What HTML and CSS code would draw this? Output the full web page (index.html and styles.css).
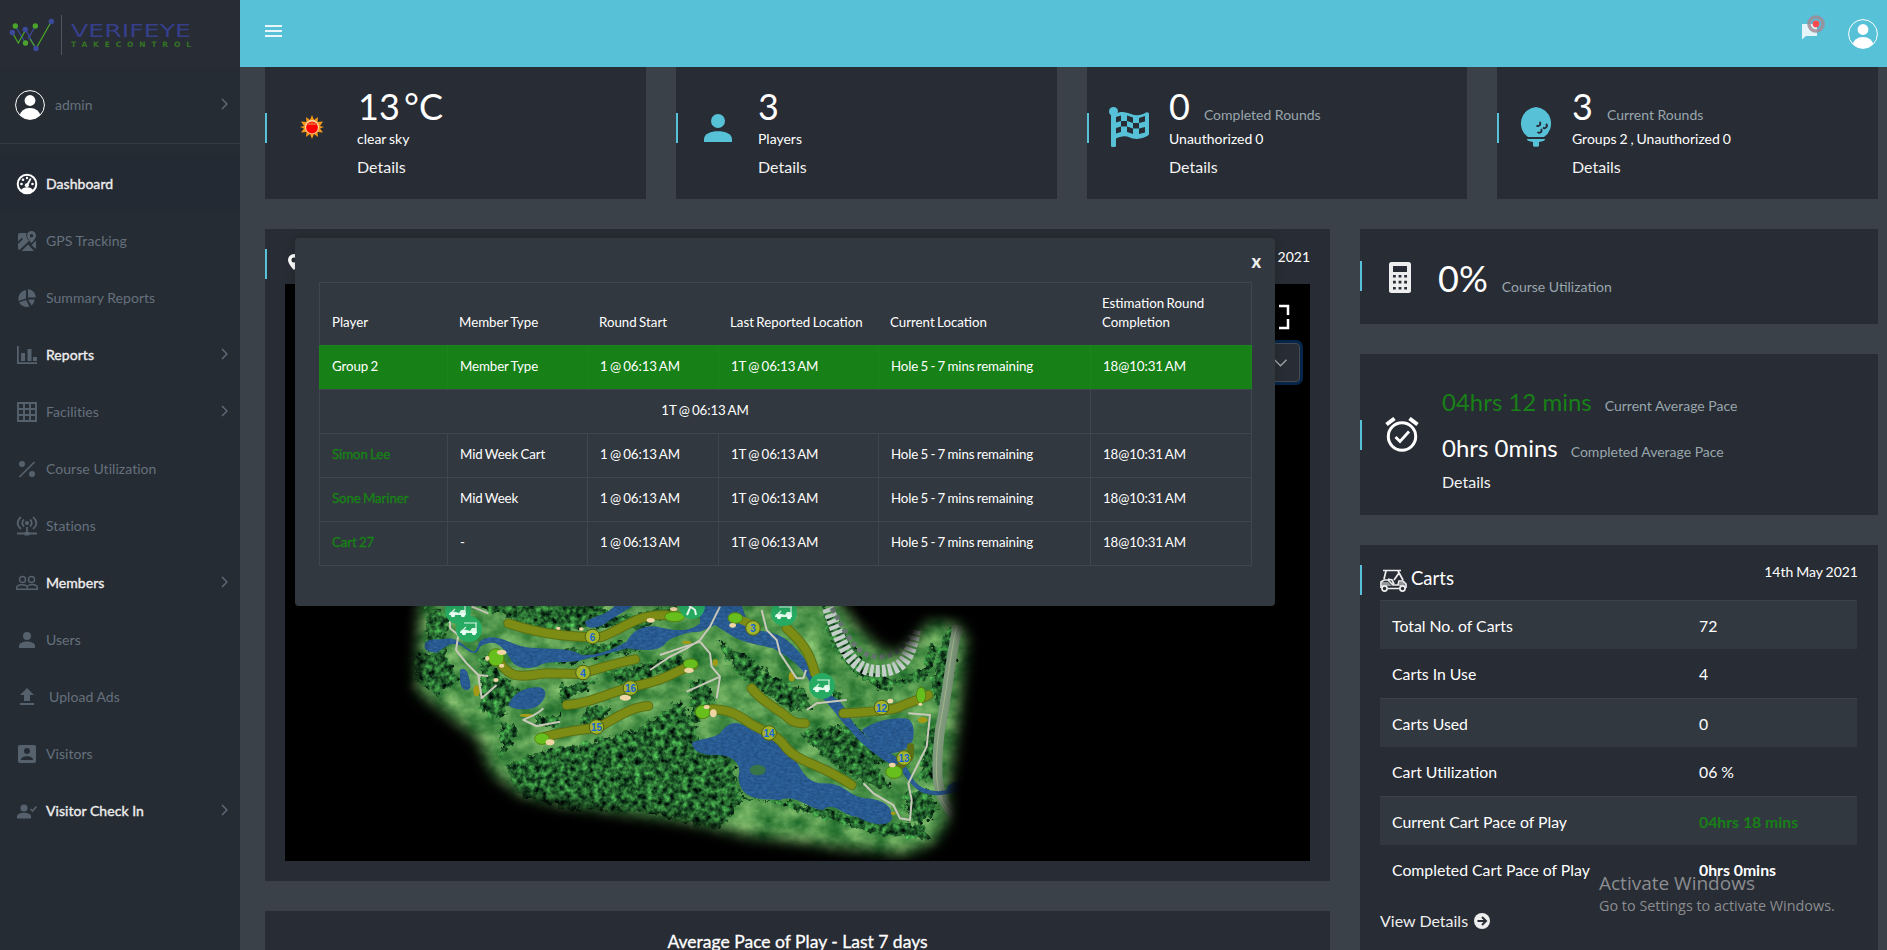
FILE: index.html
```html
<!DOCTYPE html>
<html lang="en">
<head>
<meta charset="utf-8">
<title>Verifeye Dashboard</title>
<link rel="stylesheet" href="styles.css">
</head>
<body>
<div class="app">
  <aside class="sidebar">
    <div class="brand">
      <svg class="brand-mark" viewBox="0 0 50 40" width="50" height="40" fill="none">
        <path d="M5.300 11 15.500 28M15.300 14.500 26 33.500M25.300 11 18 24" stroke="#3c4a9b" stroke-width="1.300"/>
        <path d="M2.300 17.500 8.300 28 15.300 15.500M20 24 26 33.500 41.300 6.500" stroke="#4aa32a" stroke-width="1.300"/>
        <circle cx="5.300" cy="11" r="2.700" fill="#4aa32a"/><circle cx="25.300" cy="11" r="2.700" fill="#4aa32a"/><circle cx="15.500" cy="28" r="2.700" fill="#4aa32a"/>
        <circle cx="2.300" cy="17.500" r="2.700" fill="#3d4a9c"/><circle cx="15.300" cy="14.500" r="2.700" fill="#3d4a9c"/><circle cx="26" cy="33.500" r="2.700" fill="#3d4a9c"/><circle cx="41.300" cy="6.500" r="2.700" fill="#3d4a9c"/>
      </svg>
      <svg class="brand-text" viewBox="0 0 122 30" width="122" height="30">
        <text x="0" y="18" textLength="120" lengthAdjust="spacingAndGlyphs" class="bt1">VERIFEYE</text>
        <text x="0" y="27.500" textLength="120" lengthAdjust="spacing" class="bt2">TAKECONTROL</text>
      </svg>
    </div>
    <div class="user">
      <svg width="30" height="30" viewBox="0 0 30 30"><defs><clipPath id="av"><circle cx="15" cy="15" r="14.300"/></clipPath></defs><circle cx="15" cy="15" r="14.400" fill="none" stroke="#fff"/><circle cx="15" cy="10.500" r="5.400" fill="#fff"/><ellipse cx="15" cy="26.500" rx="10.500" ry="8.500" fill="#fff" clip-path="url(#av)"/></svg>
      <span class="user-name">admin</span>
      <svg class="chev" width="7" height="12" viewBox="0 0 7 12"><path d="m1 1 5 5-5 5"/></svg>
    </div>
    <nav class="nav">
      <a class="item on"><svg class="ic" viewBox="0 0 22 22"><circle cx="11" cy="11" r="9.300" fill="none" stroke="currentColor" stroke-width="2"/><path d="M4.500 18c1-2.500 3.500-3.700 6.500-3.700s5.500 1.200 6.500 3.700a10 10 0 0 1-13 0z"/><circle cx="5.500" cy="11" r="1.300"/><circle cx="7" cy="6.800" r="1.300"/><circle cx="11" cy="5" r="1.200"/><circle cx="16.500" cy="11" r="1.300"/><circle cx="10.800" cy="12.300" r="2"/><path d="M10 12 14 5l1.500.8L12 13z"/></svg><span>Dashboard</span></a>
      <a class="item"><svg class="ic" viewBox="0 0 22 22"><path d="M4 3h6.500C9.500 5.500 10.500 8 13 11L3.500 20A2 2 0 0 1 2 18V14l5-5-1.500-1L2 11.500V5a2 2 0 0 1 2-2z"/><path d="M5.500 21 12 14.500l6 6.500zM13.500 13.300 15.500 15 20 10.500V19z"/><path d="M15.500 1a4.500 4.500 0 0 0-4.500 4.500c0 3 4.500 7.500 4.500 7.500S20 8.500 20 5.500A4.500 4.500 0 0 0 15.500 1zm0 3a1.700 1.700 0 1 1 0 3.400 1.700 1.700 0 0 1 0-3.400z" fill-rule="evenodd"/></svg><span>GPS Tracking</span></a>
      <a class="item"><svg class="ic" viewBox="0 0 22 22"><path d="M12 2a9 9 0 0 1 8 8.500h-8zM10 3v8.500L2.500 14A9 9 0 0 1 10 3zM3 15.500l7-2.500 3.500 6.500A9 9 0 0 1 3 15.500zM12 12.500h6.500c0 2.500-1.300 4.500-3 6z"/></svg><span>Summary Reports</span></a>
      <a class="item strong"><svg class="ic" viewBox="0 0 22 22"><path d="M1 2h1.800v16.200H21V20H1zM5 9h4v8H5zM11.500 5h4v12h-4zM17 13h4v4h-4z"/></svg><span>Reports</span><svg class="chev" width="7" height="12" viewBox="0 0 7 12"><path d="m1 1 5 5-5 5"/></svg></a>
      <a class="item"><svg class="ic" viewBox="0 0 22 22"><path d="M2 2h18v18H2zM8 2v18M14 2v18M2 8h18M2 14h18" fill="none" stroke="currentColor" stroke-width="1.900"/></svg><span>Facilities</span><svg class="chev" width="7" height="12" viewBox="0 0 7 12"><path d="m1 1 5 5-5 5"/></svg></a>
      <a class="item"><svg class="ic" viewBox="0 0 22 22"><circle cx="6" cy="6" r="3"/><circle cx="16" cy="16" r="3"/><path d="M18.500 4 3.500 19" stroke="currentColor" stroke-width="1.700"/></svg><span>Course Utilization</span></a>
      <a class="item"><svg class="ic" viewBox="0 0 22 22"><path d="M5 2C.5 6 .5 10 5 14M17 2c4.500 4 4.500 8 0 12M8 4.500c-2.300 2-2.300 5 0 7M14 4.500c2.300 2 2.300 5 0 7M1 18.500h20M11 12v6" fill="none" stroke="currentColor" stroke-width="1.800"/><circle cx="11" cy="8" r="2"/><path d="M8.500 17h5v3.500h-5z"/></svg><span>Stations</span></a>
      <a class="item strong"><svg class="ic" viewBox="0 0 22 22"><g fill="none" stroke="currentColor" stroke-width="1.500"><circle cx="6.500" cy="7.500" r="3"/><circle cx="15.500" cy="7.500" r="3"/><path d="M.8 17.300v-1.800c0-3.700 10.500-3.700 10.500 0v1.800zM11.300 17.300h10v-1.800c0-3.400-7-3.700-9.500-1.500"/></g></svg><span>Members</span><svg class="chev" width="7" height="12" viewBox="0 0 7 12"><path d="m1 1 5 5-5 5"/></svg></a>
      <a class="item"><svg class="ic" viewBox="0 0 22 22"><circle cx="11" cy="7" r="4"/><path d="M3 19v-2c0-6 16-6 16 0v2z"/></svg><span>Users</span></a>
      <a class="item"><svg class="ic" viewBox="0 0 22 22"><path d="m11 2 7 7h-4v6H8V9H4zM4 17h14v2H4z"/></svg><span class="nudge">Upload Ads</span></a>
      <a class="item"><svg class="ic" viewBox="0 0 22 22"><path d="M4 2h14a2 2 0 0 1 2 2v14a2 2 0 0 1-2 2H4a2 2 0 0 1-2-2V4a2 2 0 0 1 2-2zm7 3a3 3 0 1 0 0 6 3 3 0 0 0 0-6zM5 17h12c0-5-12-5-12 0z" fill-rule="evenodd"/></svg><span>Visitors</span></a>
      <a class="item strong"><svg class="ic" viewBox="0 0 22 22"><circle cx="8" cy="8" r="3.600"/><path d="M1 18.500v-2c0-5 14-5 14 0v2z"/><path d="m14.500 9 2 2 4-4.500" fill="none" stroke="currentColor" stroke-width="1.600"/></svg><span>Visitor Check In</span><svg class="chev" width="7" height="12" viewBox="0 0 7 12"><path d="m1 1 5 5-5 5"/></svg></a>
    </nav>
  </aside>

  <div class="page">
    <header class="topbar">
      <svg width="17" height="12" viewBox="0 0 17 12"><path d="M0 1h17M0 6h17M0 11h17" stroke="#e9f7fa" stroke-width="2"/></svg>
      <div class="top-right">
        <svg width="26" height="26" viewBox="0 0 26 26"><path d="M1 9h15v12H5l-4 3.500z" fill="#e3f5f9"/><circle cx="15" cy="9" r="7" fill="none" stroke="#a08b97" stroke-width="3.600" opacity=".85"/><circle cx="15" cy="9" r="3.400" fill="#fb4b50"/></svg>
        <svg width="30" height="30" viewBox="0 0 30 30"><circle cx="15" cy="15" r="14.400" fill="none" stroke="#fff"/><circle cx="15" cy="10.500" r="5.400" fill="#fff"/><ellipse cx="15" cy="26.500" rx="10.500" ry="8.500" fill="#fff" clip-path="url(#av)"/></svg>
      </div>
    </header>

    <main class="content">
      <section class="stats">
        <div class="card stat">
          <div class="stat-icon w1"><svg width="24" height="24" viewBox="0 0 24 24"><path d="m12 0 2 5 4-3-.5 5L23 6.500 20 11l4 1-4 1.500 3 4-5.500-.5.500 5-4-3-2 5-2-5-4 3 .500-5-5.500.500 3-4L0 12l4-1-3-4.500 5.500.500L6 2l4 3z" fill="#f39a1d"/><circle cx="12" cy="12" r="7" fill="#ffe0a8"/><circle cx="12" cy="12.500" r="5.900" fill="#f00"/><path d="M7 10a5.600 5 0 0 1 10 0z" fill="#ef5a26"/></svg></div>
          <div class="stat-body"><div class="big temp">13 °C</div><div class="sub">clear sky</div><a class="det">Details</a></div>
        </div>
        <div class="card stat">
          <div class="stat-icon w2"><svg width="28" height="28" viewBox="0 0 28 28" fill="#57c1d8"><circle cx="14" cy="7" r="7"/><path d="M0 28v-3c0-10.500 28-10.500 28 0v3z"/></svg></div>
          <div class="stat-body"><div class="big">3</div><div class="sub">Players</div><a class="det">Details</a></div>
        </div>
        <div class="card stat">
          <div class="stat-icon w3"><svg width="40" height="40" viewBox="0 0 40 40"><g fill="#57c1d8"><circle cx="4.500" cy="4.500" r="4.500"/><rect x="2" y="4" width="5" height="36" rx="1.500"/><path d="M6 7c6-3.500 11-2 16 0 5 2 10 1.500 15-1.500 1.500-.8 3 0 3 1.500v20c0 2-11 7.500-19 3.500-5-2-9-1.500-15 1.500z"/></g><g fill="#282c34"><path d="m7 10 5-1.500V14l-5 1.500zM18 8.500l6 2V16l-6-2zM30 11l6-2v5.500L30 16zM12 14l6 0v5.500l-6 0zM24 16l6 0v5.500l-6 0zM7 21l5-1.500V25l-5 1.500zM18 19.500l6 2V27l-6-2zM30 21.500l6-1.500v5.500L30 27z"/></g></svg></div>
          <div class="stat-body"><div class="big">0<small>Completed Rounds</small></div><div class="sub">Unauthorized 0</div><a class="det">Details</a></div>
        </div>
        <div class="card stat">
          <div class="stat-icon w4"><svg width="34" height="40" viewBox="0 0 34 40" fill="#57c1d8"><path d="M17 0a16.500 16.500 0 0 1 8 30H9A16.500 16.500 0 0 1 17 0z"/><path d="M8 32h18c0 2-2.500 2.500-6 3v4c0 1-6 1-6 0v-4c-3.500-.5-6-1-6-3z"/><path d="M20.500 15a2 2 0 0 1-3 3.500M27 17a2 2 0 0 1-3 3.500M22 22a2 2 0 0 1-3.500 3" fill="none" stroke="#282c34" stroke-width="1.900"/></svg></div>
          <div class="stat-body"><div class="big">3<small>Current Rounds</small></div><div class="sub">Groups 2 , Unauthorized 0</div><a class="det">Details</a></div>
        </div>
      </section>

      <section class="columns">
        <div class="left">
          <div class="card map-card">
            <div class="map-head"><svg width="12" height="16" viewBox="0 0 12 16"><path d="M6 0a6 6 0 0 0-6 6c0 4 6 10 6 10s6-6 6-10a6 6 0 0 0-6-6zm0 3.500a2.500 2.500 0 1 1 0 5 2.500 2.500 0 0 1 0-5z" fill="#fff" fill-rule="evenodd"/></svg><span>14th May 2021</span></div>
            <div class="map">
              <svg class="map-svg" width="1025" height="577" viewBox="285 284 1025 577" color-interpolation-filters="sRGB">
                <defs>
                  <filter id="soft" x="-10%" y="-10%" width="120%" height="120%"><feGaussianBlur stdDeviation="7"/></filter>
                  <mask id="edge"><path filter="url(#soft)" fill="#fff" d="M424 560 418 650 417 690 450 716 478 738 492 772 520 794 560 804 620 812 690 822 750 836 830 846 905 854 934 842 948 818 946 800 958 720 966 640 958 625 930 622 915 640 900 655 880 650 855 625 838 600 830 560z"/></mask>
                  <filter id="grass" x="0" y="0" width="100%" height="100%"><feTurbulence type="fractalNoise" baseFrequency=".045 .06" numOctaves="4" seed="4"/><feColorMatrix values=".6 0 0 0 .02  .5 0 0 0 .34  .4 0 0 0 .1  0 0 0 0 1"/><feComposite in2="SourceGraphic" operator="in"/></filter>
                  <filter id="trees" x="-5%" y="-5%" width="110%" height="110%"><feTurbulence type="fractalNoise" baseFrequency=".17" numOctaves="3" seed="9" result="n"/><feColorMatrix in="n" values=".55 0 0 0 -.13  1.150 0 0 0 -.18  .5 0 0 0 -.07  0 0 0 0 1" result="c"/><feDisplacementMap in="SourceGraphic" in2="n" scale="12" xChannelSelector="R" yChannelSelector="G" result="d"/><feComposite in="c" in2="d" operator="in"/></filter>
                  <filter id="water" x="0" y="0" width="100%" height="100%"><feTurbulence type="fractalNoise" baseFrequency=".08 .15" numOctaves="2" seed="3"/><feColorMatrix values=".1 0 0 0 .11  .15 0 0 0 .28  .2 0 0 0 .47  0 0 0 0 1"/><feComposite in2="SourceGraphic" operator="in"/></filter>
                  <g id="cart"><circle r="13" fill="#27ab63"/><path d="M-5-6H8M7-6v8M-6 1 -3-2" stroke="#d8f5e4" stroke-width="1.200" fill="none"/><path d="M-9 3c1-3 4-3 7-2l3 1 2-3h4l1 4v1H-9z" fill="#dff8ea"/><circle cx="-5" cy="4" r="2.200" fill="#eafff3"/><circle cx="5" cy="4" r="2.200" fill="#eafff3"/></g>
                </defs>
                <g mask="url(#edge)">
                  <rect x="400" y="560" width="600" height="300" filter="url(#grass)"/>
                  <g filter="url(#trees)" fill="#063">
                    <path d="M540 752 590 742 640 728 680 700 700 738 730 755 740 795 780 805 830 820 880 835 930 840 925 825 880 822 830 810 780 800 740 800 720 830 640 812 570 810 520 795 505 765z"/>
                    <path d="M716 640 745 655 775 678 805 690 812 708 795 712 765 695 735 670zM800 735 830 725 860 740 880 770 890 790 870 785 840 770zM835 730 855 725 890 760 880 765zM690 680 705 680 715 700 700 720 690 725zM905 790 928 790 938 810 920 825 905 810z"/>
                    <path d="M428 610 450 612 445 650 425 645zM415 655 445 650 458 680 435 695 415 680zM480 655 500 675 520 690 500 720 480 710zM470 600 600 600 620 625 550 632 480 608zM610 672 680 655 690 665 620 688zM560 685 600 680 560 705zM535 715 560 715 560 726 535 725zM585 708 610 706 600 725 580 725zM600 620 640 612 680 605 640 630zM548 655 620 640 640 650 560 665zM500 720 520 730 500 760zM820 600 850 640 865 672 900 680 925 665 930 640 940 650 925 680 880 690 850 670 830 640zM945 630 960 630 950 690 945 720 930 690zM925 735 945 720 935 780 920 780zM830 686 845 695 830 705z"/>
                  </g>
                  <path d="M958 625C950 660 948 690 940 730C934 780 938 800 955 815" fill="none" stroke="#7f9a7c" stroke-width="10"/>
                  <path d="M957 625C949 660 947 690 939 730C933 780 937 800 952 813" fill="none" stroke="#a9b58f" stroke-width="1"/>
                  <g stroke="#c4cfca" fill="none"><path d="M828 608C842 645 850 672 880 671C905 670 910 655 915 630" stroke-width="12" stroke-dasharray="4 2"/><path d="M832 608C848 635 855 657 880 657C900 655 905 645 912 628" stroke="#687a71" stroke-width="5" stroke-dasharray="5 3"/></g>
                  <g transform="translate(400 600) scale(.33333)" filter="url(#water)">
                    <path d="M75 130C85 112 115 122 145 115C180 115 200 150 222 155C245 140 220 120 270 112C310 110 335 135 380 142C450 150 500 140 545 165C610 165 640 145 680 125C700 85 740 75 770 80C800 85 860 105 900 70L900 50 920 0 1020 0 1050 90C1120 95 1150 100 1200 160C1230 190 1250 250 1300 290C1350 320 1330 350 1400 410C1440 450 1500 460 1530 520C1550 570 1600 580 1640 570C1640 540 1700 540 1730 560L1725 580C1690 560 1650 590 1600 585C1540 580 1530 540 1500 510C1430 470 1380 430 1350 390C1310 350 1300 320 1240 270C1220 210 1180 180 1120 145C1060 130 1040 130 1000 110L945 75 900 95C860 95 820 110 800 125C780 160 720 150 680 145C600 170 560 175 540 182C480 190 440 180 410 200C370 210 340 200 330 175C310 145 290 110 240 140C230 170 210 160 190 140C150 120 140 140 110 158C80 155 70 150 75 130z"/>
                    <path d="M555 65C600 40 620 50 660 0L720 0C690 30 640 50 610 75C580 85 560 90 555 65zM180 210C195 200 205 210 212 260C205 280 180 270 180 240zM325 315C340 280 370 260 420 262C450 270 435 310 400 325C370 330 340 330 325 315zM875 430C890 415 930 420 960 400C990 360 1010 365 1040 380C1070 400 1120 420 1150 430C1200 480 1200 540 1260 550C1340 545 1340 590 1400 595C1460 600 1480 625 1475 660C1455 685 1410 670 1370 650C1330 650 1300 600 1270 630C1230 630 1190 580 1140 600C1060 600 1020 590 1015 530C1030 480 980 460 930 465C890 460 880 450 875 430z"/>
                    <path d="M1385 390C1410 375 1440 355 1510 355C1550 350 1550 430 1520 445C1500 460 1470 460 1450 465C1430 430 1400 415 1385 390z"/>
                  </g>
                  <g transform="translate(400 600) scale(.33333)">
                    <g stroke-linecap="round" fill="none" stroke="#5c7115" stroke-width="30"><path d="M325 70C400 95 470 110 600 112C670 90 720 30 820 48"/><path d="M290 170C330 250 370 225 440 220L540 222C620 200 640 190 705 178"/><path d="M500 315C580 310 640 270 720 255C800 240 820 215 880 195"/><path d="M420 415C500 390 560 390 600 380C660 345 700 320 745 318"/><path d="M1160 85C1210 130 1230 160 1245 220"/><path d="M1055 265C1090 310 1140 330 1160 350C1180 370 1200 370 1215 370"/><path d="M910 330C970 320 1010 340 1050 370C1100 400 1130 400 1160 445C1200 490 1260 490 1355 555"/><path d="M1330 340C1400 335 1470 335 1500 320C1530 305 1560 300 1585 285"/><path d="M1480 520 1530 470 1532 440" stroke-width="22"/></g>
                    <g stroke="#7c8c14" stroke-width="24" stroke-linecap="round" fill="none"><path d="M325 70C400 95 470 110 600 112C670 90 720 30 820 48"/><path d="M290 170C330 250 370 225 440 220L540 222C620 200 640 190 705 178"/><path d="M500 315C580 310 640 270 720 255C800 240 820 215 880 195"/><path d="M420 415C500 390 560 390 600 380C660 345 700 320 745 318"/><path d="M1160 85C1210 130 1230 160 1245 220"/><path d="M1055 265C1090 310 1140 330 1160 350C1180 370 1200 370 1215 370"/><path d="M910 330C970 320 1010 340 1050 370C1100 400 1130 400 1160 445C1200 490 1260 490 1355 555"/><path d="M1330 340C1400 335 1470 335 1500 320C1530 305 1560 300 1585 285"/><path d="M1000 50 1060 75"/></g>
                    <g fill="#66bf1c" stroke="#55820f" stroke-width="3"><ellipse cx="288" cy="172" rx="24" ry="26"/><ellipse cx="824" cy="50" rx="30" ry="15"/><ellipse cx="872" cy="192" rx="22" ry="15"/><ellipse cx="426" cy="416" rx="22" ry="17"/><ellipse cx="1006" cy="54" rx="22" ry="16"/><ellipse cx="908" cy="336" rx="22" ry="20"/><ellipse cx="1563" cy="286" rx="14" ry="24"/><ellipse cx="1482" cy="516" rx="25" ry="19"/></g>
                    <g fill="#f0d5a5"><ellipse cx="305" cy="157" rx="14" ry="8"/><ellipse cx="262" cy="175" rx="6" ry="7"/><ellipse cx="305" cy="197" rx="8" ry="6"/><ellipse cx="288" cy="240" rx="8" ry="6"/><ellipse cx="867" cy="211" rx="14" ry="8"/><ellipse cx="676" cy="293" rx="17" ry="9"/><ellipse cx="450" cy="427" rx="13" ry="9"/><ellipse cx="752" cy="61" rx="12" ry="7"/><ellipse cx="821" cy="27" rx="11" ry="6"/><ellipse cx="475" cy="85" rx="7" ry="5"/><ellipse cx="544" cy="87" rx="7" ry="5"/><ellipse cx="998" cy="76" rx="10" ry="7"/><ellipse cx="940" cy="340" rx="10" ry="12"/><ellipse cx="920" cy="321" rx="9" ry="6"/><ellipse cx="1471" cy="303" rx="9" ry="7"/><ellipse cx="1477" cy="495" rx="10" ry="7"/><ellipse cx="1561" cy="313" rx="6" ry="5"/></g>
                    <g fill="#a39a16"><ellipse cx="230" cy="272" rx="10" ry="17"/><ellipse cx="380" cy="346" rx="22" ry="5"/><ellipse cx="860" cy="127" rx="14" ry="5"/><ellipse cx="1175" cy="230" rx="9" ry="14"/><ellipse cx="946" cy="188" rx="8" ry="10"/><ellipse cx="1568" cy="360" rx="15" ry="9"/><ellipse cx="1480" cy="640" rx="8" ry="5"/></g>
                    <g fill="none" stroke="#c9c8bb" stroke-width="6" stroke-linejoin="round"><path d="M150 60 150 85 175 105 168 150 200 190 235 225 245 295 290 255M235 225 265 228M430 325C410 345 390 350 370 360L410 378 480 365M960 20 930 80 900 120 860 145 810 170 750 210M900 125 780 165M215 20 265 40M900 125 930 160 935 200 960 230 950 295M960 230 860 275M1085 30 1100 90 1130 120 1140 160 1190 235 1210 235 1218 210M1220 330 1250 310 1340 300M1525 340 1590 345 1580 440 1550 500 1525 550 1535 600 1530 660 1500 655 1480 615 1420 580 1390 550"/></g>
                    <ellipse cx="1073" cy="510" rx="24" ry="16" fill="#377447"/>
                  </g>
                </g>
                <g class="holes"><g fill="#a1b52c" stroke="#4e5c14"><circle cx="592.500" cy="636.500" r="7.300"/><circle cx="583" cy="672.500" r="7.300"/><circle cx="630.500" cy="688" r="7.300"/><circle cx="596.500" cy="727" r="7.300"/><circle cx="753" cy="628" r="7.300"/><circle cx="881.500" cy="707.500" r="7.300"/><circle cx="769" cy="733" r="7.300"/><circle cx="904" cy="758" r="7.300"/></g>
                <text x="592.500" y="641">6</text><text x="583" y="677">4</text><text x="630.500" y="692">16</text><text x="596.500" y="731">15</text><text x="753" y="632">3</text><text x="881.500" y="712">12</text><text x="769" y="737">14</text><text x="904" y="762">13</text></g>
                <use href="#cart" x="458" y="611"/><use href="#cart" x="469" y="629"/><use href="#cart" x="784" y="613"/><use href="#cart" x="822" y="686"/><circle cx="692" cy="606" r="13" fill="#27ab63"/><path d="M691 602l-1 6-3 7M691 607l4 3 1 5M688 606l4-5" stroke="#eafff3" stroke-width="2" fill="none"/>
              </svg>
              <svg class="full" width="26" height="26" viewBox="0 0 26 26"><path d="M2 11V2h9M15 2h9v9M24 15v9h-9M11 24H2v-9" fill="none" stroke="#fff" stroke-width="2.500"/></svg>
              <div class="select"><svg width="13" height="8" viewBox="0 0 13 8"><path d="m.5.800 6 6 6-6" fill="none" stroke="#9fa5aa" stroke-width="1.300"/></svg></div>
            </div>
          </div>
          <div class="card chart-card">Average Pace of Play - Last 7 days</div>
        </div>

        <div class="right">
          <div class="card util">
            <svg width="22" height="31" viewBox="0 0 22 31"><path d="M2.500 0h17A2.500 2.500 0 0 1 22 2.500v26a2.500 2.500 0 0 1-2.500 2.500h-17A2.500 2.500 0 0 1 0 28.500v-26A2.500 2.500 0 0 1 2.500 0zM4 4v6h14V4zM4 13v2.600h2.800V13zM9.600 13v2.600h2.800V13zM15.200 13v2.600H18V13zM4 18.800v2.600h2.800v-2.600zM9.600 18.800v2.600h2.800v-2.600zM15.200 18.800v2.600H18v-2.600zM4 25v2.600h2.800V25zM9.600 25v2.600h2.800V25zM15.200 25v2.600H18V25z" fill="#eee" fill-rule="evenodd"/></svg>
            <div class="big">0%<small>Course Utilization</small></div>
          </div>
          <div class="card pace">
            <svg width="34" height="35" viewBox="0 0 34 35" fill="none" stroke="#fff"><circle cx="17" cy="19.500" r="13.700" stroke-width="3"/><path d="m1.500 7.500 8-6M32.500 7.500l-8-6" stroke-width="4"/><path d="m10.500 20 4.500 4.500 9-10" stroke-width="2.800"/></svg>
            <div class="pace-body">
              <div class="mid green">04hrs 12 mins<small>Current Average Pace</small></div>
              <div class="mid">0hrs 0mins<small>Completed Average Pace</small></div>
              <a class="det">Details</a>
            </div>
          </div>
          <div class="card carts">
            <div class="carts-head">
              <svg width="27" height="23" viewBox="0 0 27 23" fill="none" stroke="#eee" stroke-width="1.700"><path d="M3 1.500h18M6 2 4 10M18 2l5 9M1 19v-6l3-2h4l5 5h5l1-4h4l3 3v4M7.500 19.500h12M14 11l5-7M8 10l4 1 2 4"/><path d="M2 13h6l4 4h6l2-4h4l1 4H2z" fill="#eee" stroke="none" opacity=".55"/><circle cx="4.500" cy="19.500" r="2.600"/><circle cx="22.500" cy="19.500" r="2.600"/></svg>
              <h3>Carts</h3><span>14th May 2021</span>
            </div>
            <div class="rows">
              <div class="row"><span>Total No. of Carts</span><span>72</span></div>
              <div class="row"><span>Carts In Use</span><span>4</span></div>
              <div class="row"><span>Carts Used</span><span>0</span></div>
              <div class="row"><span>Cart Utilization</span><span>06 %</span></div>
              <div class="row"><span>Current Cart Pace of Play</span><b class="green">04hrs 18 mins</b></div>
              <div class="row"><span>Completed Cart Pace of Play</span><b>0hrs 0mins</b></div>
            </div>
            <a class="view">View Details <svg width="16" height="16" viewBox="0 0 16 16"><circle cx="8" cy="8" r="8" fill="#eee"/><path d="M3.500 8h8M8 4l4 4-4 4" fill="none" stroke="#282c34" stroke-width="2"/></svg></a>
          </div>
        </div>
      </section>
    </main>
  </div>

  <div class="modal">
    <button class="close">x</button>
    <table class="tbl">
      <colgroup><col class="c1"><col class="c2"><col class="c3"><col class="c4"><col class="c5"><col class="c6"></colgroup>
      <thead><tr><th>Player</th><th>Member Type</th><th>Round Start</th><th>Last Reported Location</th><th>Current Location</th><th>Estimation Round<br>Completion</th></tr></thead>
      <tbody>
        <tr class="group"><td>Group 2</td><td>Member Type</td><td>1 @ 06:13 AM</td><td>1T @ 06:13 AM</td><td>Hole 5 - 7 mins remaining</td><td>18@10:31 AM</td></tr>
        <tr><td colspan="5" class="mid-cell">1T @ 06:13 AM</td><td></td></tr>
        <tr><td class="green name">Simon Lee</td><td>Mid Week Cart</td><td>1 @ 06:13 AM</td><td>1T @ 06:13 AM</td><td>Hole 5 - 7 mins remaining</td><td>18@10:31 AM</td></tr>
        <tr><td class="green name">Sone Mariner</td><td>Mid Week</td><td>1 @ 06:13 AM</td><td>1T @ 06:13 AM</td><td>Hole 5 - 7 mins remaining</td><td>18@10:31 AM</td></tr>
        <tr><td class="green name">Cart 27</td><td>-</td><td>1 @ 06:13 AM</td><td>1T @ 06:13 AM</td><td>Hole 5 - 7 mins remaining</td><td>18@10:31 AM</td></tr>
      </tbody>
    </table>
  </div>

  <div class="watermark"><div class="wm1">Activate Windows</div><div class="wm2">Go to Settings to activate Windows.</div></div>
</div>
</body>
</html>
```

FILE: styles.css
```css
* { box-sizing: border-box; }
body { margin: 0; background: #3a4149; font-family: Lato, sans-serif; color: #fff; }
.app { position: relative; display: flex; width: 1887px; height: 950px; overflow: hidden; background: #3a4148; }
svg { display: block; flex: none; }

.sidebar { width: 240px; flex: none; background: #262c33; }
.brand { height: 67px; background: #282c34; display: flex; align-items: flex-start; padding: 15px 0 0 10px; }
.brand-mark { overflow: visible; }
.brand-text { margin-left: 1px; padding-left: 9px; width: 132px; height: 40px; border-left: 1px solid #51555b; padding-bottom: 6px; padding-top: 4px; }
.bt1 { font-family: "DejaVu Sans", sans-serif; font-size: 17.500px; fill: #363f8b; }
.bt2 { font-family: "DejaVu Sans", sans-serif; font-size: 7.500px; fill: #357425; font-weight: bold; }
.user { height: 77px; display: flex; align-items: center; padding: 0 12px 0 15px; border-bottom: 1px solid #333a42; }
.user-name { margin: -2px 0 0 10px; font-size: 14px; color: #65717e; }
.chev { margin-left: auto; margin-top: -2px; fill: none; stroke: #65717e; stroke-width: 1.200; }
.nav { padding-top: 11px; }
.item { display: flex; align-items: center; height: 57px; padding: 0 12px 0 16px; font-size: 14px; color: #65717e; }
.item span { margin-left: 8px; margin-top: -1px; letter-spacing: .05px; }
.item .nudge { margin-left: 11px; }
.item.on { color: #fff; background: #242a33; }
.item.on span, .item.strong span { color: #eee; -webkit-text-stroke: .35px #eee; }
.ic { width: 22px; height: 22px; fill: currentColor; color: #55616d; }
.on .ic { color: #fff; }

.page { flex: 1; min-width: 0; }
.topbar { height: 67px; background: #57c1d8; display: flex; justify-content: space-between; align-items: flex-start; padding: 25px 9px 0 25px; }
.top-right { display: flex; gap: 21px; margin-top: -10px; }
.top-right svg + svg { margin-top: 4px; }
.content { padding: 0 9px 0 25px; }

.card { position: relative; background: #282c34; }
.card::before { content: ""; position: absolute; left: 0; width: 2px; height: 30px; background: #57c1d8; }
.stats { display: grid; grid-template-columns: 381px 381px 380px 381px; gap: 30px; }
.stat { height: 132px; display: flex; }
.stat::before { top: 46px; }
.stat-icon { flex: none; display: flex; align-items: center; height: 120px; }
.w1 { width: 92px; padding-left: 35px; }
.w2 { width: 82px; padding-left: 28px; padding-top: 2px; }
.w3 { width: 82px; padding-left: 22px; }
.w4 { width: 75px; padding-left: 22px; }
.stat-body { padding-top: 17px; }
.big { font-size: 36px; line-height: 44px; height: 44px; white-space: nowrap; }
.temp { word-spacing: -5px; padding-left: 1px; }
.big small, .mid small { font-size: 14px; color: #98a6ad; margin-left: 14px; }
.sub { font-size: 14px; line-height: 22px; word-spacing: -.7px; }
.det { display: block; font-size: 16px; line-height: 24px; margin-top: 5px; color: #f3f3f3; }

.columns { display: flex; gap: 30px; margin-top: 30px; }
.left { width: 1065px; flex: none; }
.right { width: 518px; flex: none; }
.map-card { height: 652px; padding: 0 20px; }
.map-card::before { top: 20px; }
.map-head { height: 55px; display: flex; justify-content: space-between; padding: 25px 0 0 3px; font-size: 14px; }
.map-head span { margin-top: -6px; }
.map { position: relative; background: #000; height: 577px; }
.holes text { font: bold 10px "Liberation Sans", sans-serif; fill: #1765d8; text-anchor: middle; }
.full { position: absolute; right: 20px; top: 20px; }
.select { position: absolute; right: 10px; top: 59px; width: 260px; height: 39px; border: 1px solid #454b52; border-radius: 4px; background: #282c34; box-shadow: 0 0 0 3px #05264a; display: flex; align-items: center; justify-content: flex-end; padding-right: 12px; }
.chart-card { margin-top: 30px; height: 300px; text-align: center; padding-top: 19px; font-size: 17.500px; line-height: 24px; -webkit-text-stroke: .3px #fff; }
.chart-card::before { display: none; }

.util { height: 95px; display: flex; padding: 33px 0 0 29px; }
.util::before { top: 32px; }
.util .big { margin: -6px 0 0 27px; }
.pace { height: 161px; margin-top: 30px; display: flex; padding-left: 25px; }
.pace::before { top: 66px; }
.pace > svg { margin-top: 63px; }
.pace-body { margin-left: 23px; padding-top: 31px; }
.mid { font-size: 24px; line-height: 34px; margin-bottom: 12px; height: 34px; white-space: nowrap; }
.mid small { margin-left: 13px; }
.pace .det { margin-top: -7px; }
.green { color: #178017; }
.carts { height: 420px; margin-top: 30px; padding: 0 21px 0 20px; }
.carts::before { top: 20px; }
.carts-head { height: 55px; display: flex; padding-top: 24px; }
.carts-head h3 { margin: -3px 0 0 4px; font-size: 18.500px; font-weight: 400; line-height: 24px; }
.carts-head span { margin: -6px -1px 0 auto; font-size: 14px; line-height: 18px; word-spacing: -.7px; }
.row { height: 49px; display: flex; align-items: center; padding: 0 0 0 12px; font-size: 15.800px; }
.row > :first-child { width: 307px; }
.row:nth-child(odd) { background: #32383f; border-top: 1px solid #3c4249; }
.view { display: flex; align-items: center; gap: 6px; font-size: 16px; line-height: 24px; margin-top: 15px; color: #eee; }

.modal { position: absolute; z-index: 3; left: 295px; top: 238px; width: 980px; height: 368px; background: #32383f; border-radius: 4px; box-shadow: 0 0 10px rgba(0,0,0,.2); }
.close { display: block; position: absolute; right: 14px; top: 11px; background: none; border: 0; padding: 0; font: 900 18px/24px Lato, sans-serif; color: #eee; }
.tbl { margin: 44px 0 0 24px; width: 932px; border-collapse: collapse; table-layout: fixed; font-size: 13.300px; line-height: 19px; border: 1px solid #40464d; word-spacing: -1px; }
.c1 { width: 128px; } .c2 { width: 140px; } .c3 { width: 131px; } .c4 { width: 160px; } .c5 { width: 212px; } .c6 { width: 161px; }
.tbl th { height: 63px; font-weight: 400; text-align: left; vertical-align: bottom; padding: 0 0 13px 11.500px; }
.tbl th:first-child { padding-left: 12px; }
.tbl td { height: 44px; padding: 0 0 2px 12px; border: 1px solid #40464d; letter-spacing: -.1px; }
.tbl .group td { background: #178017; border-color: #1c841c; border-bottom-color: #40464d; }
.tbl .mid-cell { text-align: center; padding-left: 0; }
.tbl .name { -webkit-text-stroke: .4px #178017; }

.watermark { position: absolute; z-index: 4; left: 1599px; top: 870px; font-family: "Open Sans", sans-serif; color: #8b8d90; white-space: nowrap; }
.wm1 { font-size: 19px; line-height: 27px; }
.wm2 { font-size: 14.400px; line-height: 18px; }
```
